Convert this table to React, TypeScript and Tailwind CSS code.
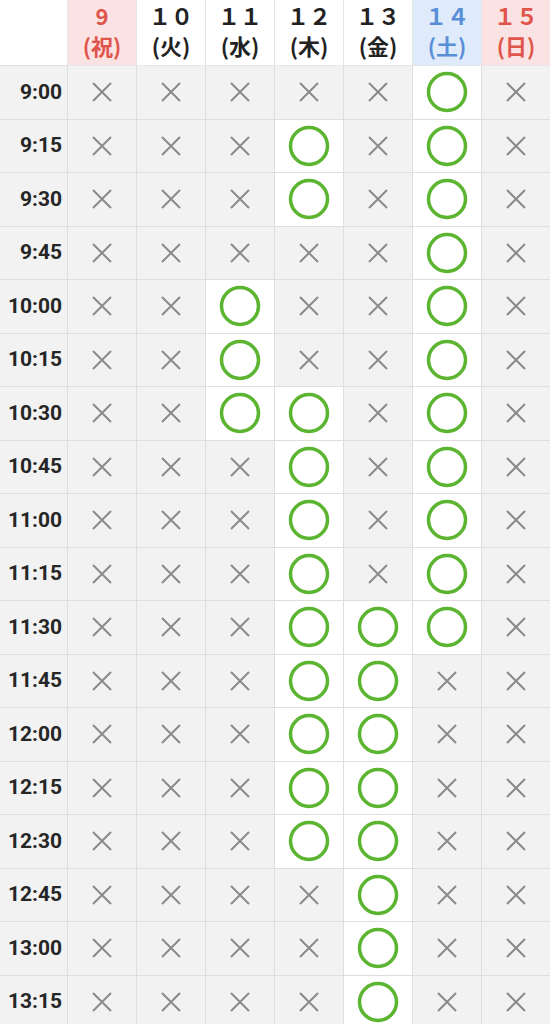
import React from 'react';

const days = [
  { num: '9', wd: '(祝)', head: 'bg-[#fce3e3]', text: 'text-[#e0554b]' },
  { num: '１０', wd: '(火)', head: 'bg-white', text: 'text-[#222]' },
  { num: '１１', wd: '(水)', head: 'bg-white', text: 'text-[#222]' },
  { num: '１２', wd: '(木)', head: 'bg-white', text: 'text-[#222]' },
  { num: '１３', wd: '(金)', head: 'bg-white', text: 'text-[#222]' },
  { num: '１４', wd: '(土)', head: 'bg-[#dfeafa]', text: 'text-[#5a8fd8]' },
  { num: '１５', wd: '(日)', head: 'bg-[#fce3e3]', text: 'text-[#e0554b]' },
];

// o = available, x = full
const rows: [string, string][] = [
  ['9:00', 'xxxxxox'],
  ['9:15', 'xxxoxox'],
  ['9:30', 'xxxoxox'],
  ['9:45', 'xxxxxox'],
  ['10:00', 'xxoxxox'],
  ['10:15', 'xxoxxox'],
  ['10:30', 'xxooxox'],
  ['10:45', 'xxxoxox'],
  ['11:00', 'xxxoxox'],
  ['11:15', 'xxxoxox'],
  ['11:30', 'xxxooox'],
  ['11:45', 'xxxooxx'],
  ['12:00', 'xxxooxx'],
  ['12:15', 'xxxooxx'],
  ['12:30', 'xxxooxx'],
  ['12:45', 'xxxxoxx'],
  ['13:00', 'xxxxoxx'],
  ['13:15', 'xxxxoxx'],
];

function Circle() {
  return (
    <svg width="42" height="42" viewBox="0 0 42 42">
      <circle cx="21" cy="21" r="18.5" fill="none" stroke="#5cb531" strokeWidth="3.5" />
    </svg>
  );
}

function Cross() {
  return (
    <svg width="22" height="22" viewBox="0 0 22 22">
      <path d="M2 2L20 20M20 2L2 20" stroke="#8a8a8a" strokeWidth="2" />
    </svg>
  );
}

export default function App() {
  return (
    <div className="w-[550px] h-[1024px] overflow-hidden bg-white font-['Roboto','Noto_Sans_CJK_JP',sans-serif]">
      <div className="grid grid-cols-[67px_repeat(7,69px)]">
        <div className="h-[66px] bg-white border-b border-[#dedede]" />
        {days.map((d) => (
          <div
            key={d.num}
            className={`h-[66px] flex flex-col items-center justify-start border-l border-b border-[#e6e6e6] ${d.head} ${d.text} font-['Noto_Sans_CJK_JP',sans-serif] text-[22px] leading-[30px] font-bold`}
          >
            <span>{d.num}</span>
            <span>{d.wd}</span>
          </div>
        ))}
        {rows.map(([time, marks]) => (
          <React.Fragment key={time}>
            <div className="h-[53.5px] flex items-center justify-end pr-[5px] bg-[#f2f2f2] border-b border-[#dedede] text-[21px] font-bold text-[#262626]">
              {time}
            </div>
            {marks.split('').map((m, i) => (
              <div
                key={i}
                className={`h-[53.5px] flex items-center justify-center border-l border-b border-[#dedede] ${
                  m === 'o' ? 'bg-white' : 'bg-[#f2f2f2]'
                }`}
              >
                {m === 'o' ? <Circle /> : <Cross />}
              </div>
            ))}
          </React.Fragment>
        ))}
      </div>
    </div>
  );
}
